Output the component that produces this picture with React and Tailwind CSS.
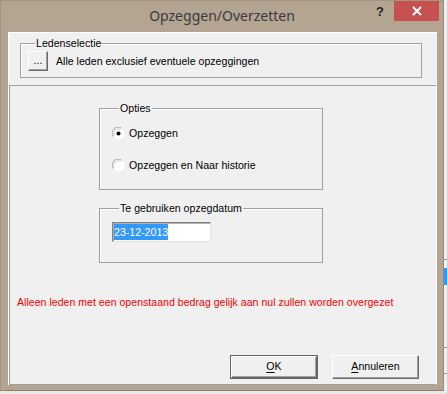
import React from "react";

function Group({ label, className, children }) {
  return (
    <fieldset className={"border border-[#a0a0a0] shadow-[inset_1px_1px_0_#ffffff] " + className}>
      <legend className="ml-[7px] px-[1px] leading-[13px]">{label}</legend>
      {children}
    </fieldset>
  );
}

function Radio({ checked, label }) {
  return (
    <div className="flex items-center h-[13px] gap-[4px]">
      <svg width="13" height="13" viewBox="0 0 13 13">
        <circle cx="6.5" cy="6.5" r="6" fill="#ffffff" />
        <path d="M1.2 9.5 A6 6 0 0 1 9.5 1.2" fill="none" stroke="#a0a0a0" strokeWidth="1" />
        <path d="M2.2 8.8 A5 5 0 0 1 8.8 2.2" fill="none" stroke="#cfcfcf" strokeWidth="1" />
        {checked && <circle cx="6.5" cy="6.5" r="2" fill="#000000" />}
      </svg>
      <span className="leading-[13px]">{label}</span>
    </div>
  );
}

function Button({ children, isDefault }) {
  return (
    <div
      className={
        isDefault
          ? "w-[88px] h-[24px] border border-[#646464] bg-[#f0f0f0] flex"
          : "w-[87px] h-[24px] flex"
      }
    >
      <div className="flex-1 flex items-center justify-center bg-[#f0f0f0] border border-t-white border-l-white border-b-[#696969] border-r-[#696969] shadow-[inset_-1px_-1px_0_#a0a0a0]">
        {children}
      </div>
    </div>
  );
}

export default function App() {
  return (
    <div className="w-[447px] h-[394px] bg-[#f0f0f0] flex flex-col font-['Liberation_Sans',Arial,sans-serif] text-[10.6px] text-black">
      <div className="flex">
        <div className="w-[444px] h-[391px] bg-[#b4a492] border border-[#a49483] border-b-[#8f8070] border-r-[#9a8a79] flex flex-col">
          {/* title bar */}
          <div className="h-[31px] grid grid-cols-[1fr_auto_1fr]">
            <div />
            <div className="pt-[4px] font-['Noto_Sans',sans-serif] text-[14px] text-[#3a3a3a] leading-[22px]">
              Opzeggen/Overzetten
            </div>
            <div className="flex justify-end items-start pr-[4px]">
              <span className="mt-[4px] mr-[10px] font-['Liberation_Sans',sans-serif] font-bold text-[13px] leading-[14px] text-[#262626]">
                ?
              </span>
              <div className="w-[45px] h-[20px] bg-[#c75050] flex items-center justify-center">
                <svg width="10" height="10" viewBox="0 0 10 10">
                  <path d="M1 1 L9 9 M9 1 L1 9" stroke="#ffffff" strokeWidth="2" />
                </svg>
              </div>
            </div>
          </div>
          {/* client */}
          <div className="ml-[7px] w-[429px] h-[353px] bg-[#f0f0f0] border-l border-t border-[#ffffff] flex flex-col">
            <div className="h-[52px] flex flex-col">
              <Group label="Ledenselectie" className="mt-[4px] ml-[11px] w-[402px] h-[41px] pl-[7px]">
                <div className="flex items-center mt-[1px] gap-[8px]">
                  <div className="w-[20px] h-[20px] bg-[#f0f0f0] border border-t-white border-l-white border-b-[#696969] border-r-[#696969] shadow-[inset_-1px_-1px_0_#a0a0a0] flex items-center justify-center leading-[13px] pb-[1px]">
                    ...
                  </div>
                  <span className="leading-[13px]">Alle leden exclusief eventuele opzeggingen</span>
                </div>
              </Group>
            </div>
            <div className="flex-1 flex flex-col border-t border-l border-b border-[#a0a0a0] border-r border-r-white">
              <Group label="Opties" className="mt-[16px] ml-[89px] w-[224px] h-[88px] pl-[12px]">
                <div className="mt-[12px] flex flex-col gap-[19px]">
                  <Radio checked label="Opzeggen" />
                  <Radio label="Opzeggen en Naar historie" />
                </div>
              </Group>
              <Group label="Te gebruiken opzegdatum" className="mt-[12px] ml-[89px] w-[224px] h-[61px] pl-[12px]">
                <div className="mt-[7px] w-[99px] h-[20px] bg-white border border-t-[#808080] border-l-[#808080] border-b-[#e3e3e3] border-r-[#e3e3e3] shadow-[inset_1px_1px_0_#b0b0b0] flex items-center pl-[1px]">
                  <span className="bg-[#3399ff] text-white leading-[16px] px-[0px]">23-12-2013</span>
                </div>
              </Group>
              <div className="mt-[33px] ml-[7px] leading-[13px] text-[#ff0000]">
                Alleen leden met een openstaand bedrag gelijk aan nul zullen worden overgezet
              </div>
              <div className="mt-auto mb-[5px] mr-[17px] flex justify-end gap-[14px]">
                <Button isDefault>
                  <span><span className="underline underline-offset-2">O</span>K</span>
                </Button>
                <Button>
                  <span><span className="underline underline-offset-2">A</span>nnuleren</span>
                </Button>
              </div>
            </div>
          </div>
        </div>
        <div className="w-[3px] h-[391px] bg-[#f0f0f0] flex flex-col">
          <div className="h-[259px]" />
          <div className="h-[1px] bg-[#a0a0a0]" />
          <div className="h-[8px]" />
          <div className="h-[17px] bg-[#3399ff]" />
          <div className="h-[62px]" />
          <div className="h-[1px] bg-[#a0a0a0]" />
          <div className="h-[25px]" />
          <div className="h-[1px] bg-[#a0a0a0]" />
        </div>
      </div>
      <div className="h-[3px] bg-[#e8e8e8]" />
    </div>
  );
}
